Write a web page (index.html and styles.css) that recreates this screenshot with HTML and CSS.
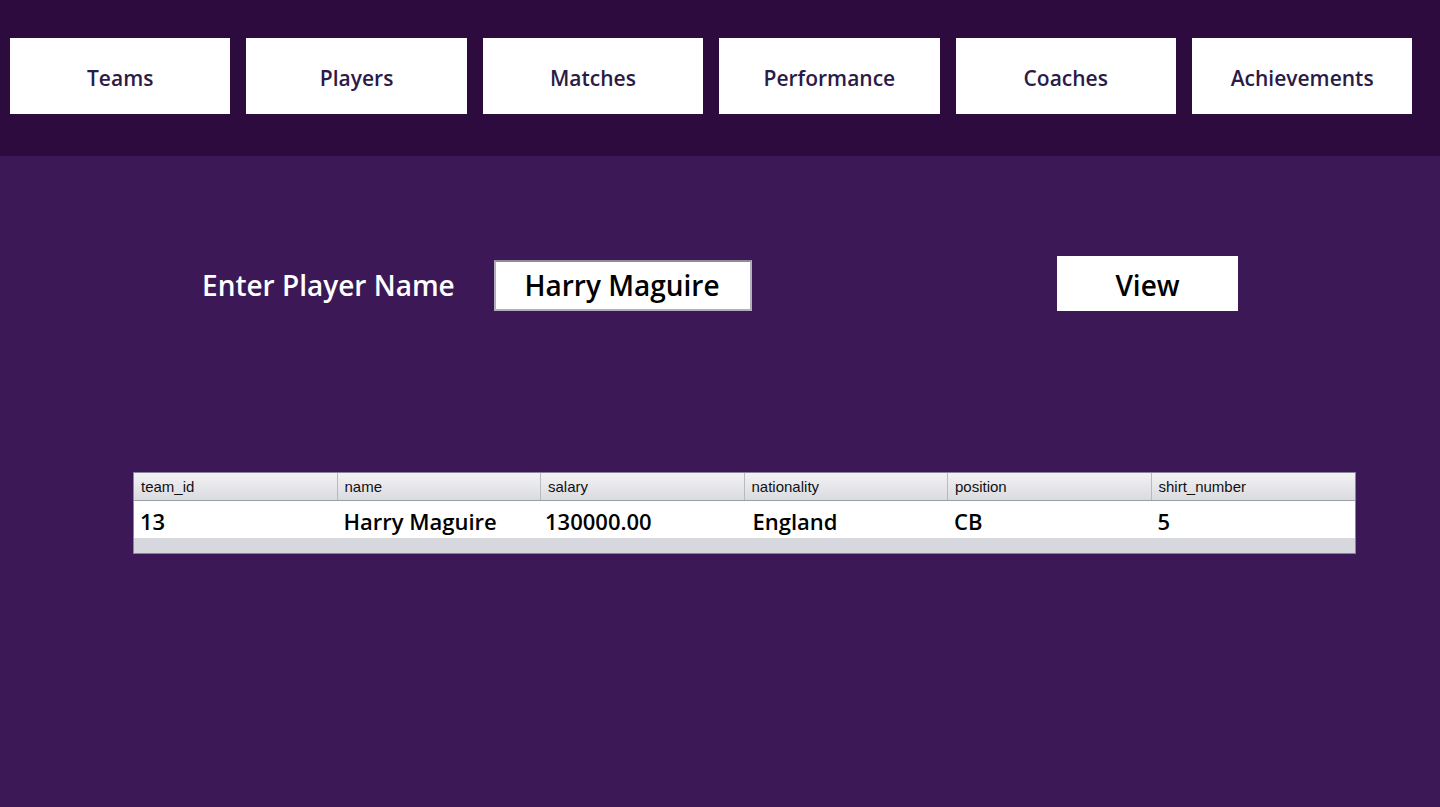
FILE: index.html
```html
<!DOCTYPE html>
<html>
<head>
<meta charset="utf-8">
<link rel="stylesheet" href="styles.css">
</head>
<body>
<header class="topbar">
  <nav class="nav">
    <div class="nav-btn">Teams</div>
    <div class="nav-btn">Players</div>
    <div class="nav-btn">Matches</div>
    <div class="nav-btn">Performance</div>
    <div class="nav-btn">Coaches</div>
    <div class="nav-btn">Achievements</div>
  </nav>
</header>
<main class="main">
  <div class="search-row">
    <div class="label">Enter Player Name</div>
    <div class="input">Harry Maguire</div>
    <div class="view-btn">View</div>
  </div>
  <div class="table">
    <div class="thead">
      <div class="th">team_id</div>
      <div class="th">name</div>
      <div class="th">salary</div>
      <div class="th">nationality</div>
      <div class="th">position</div>
      <div class="th last">shirt_number</div>
    </div>
    <div class="trow">
      <div class="td">13</div>
      <div class="td">Harry Maguire</div>
      <div class="td">130000.00</div>
      <div class="td">England</div>
      <div class="td">CB</div>
      <div class="td">5</div>
    </div>
    <div class="tfill"></div>
  </div>
</main>
</body>
</html>
```
FILE: styles.css
```css
* { box-sizing: border-box; }
html, body { margin: 0; padding: 0; }
body {
  width: 1440px;
  height: 807px;
  overflow: hidden;
  background: #3d1857;
  font-family: "Open Sans", "Noto Sans", sans-serif;
}
.topbar {
  height: 156px;
  background: #2e0b3f;
  padding: 38px 0 0 10px;
}
.nav {
  display: flex;
  gap: 16px;
}
.nav-btn {
  width: 220.4px;
  height: 76px;
  background: #ffffff;
  display: flex;
  align-items: center;
  justify-content: center;
  color: #2c1a47;
  font-size: 21px;
  font-weight: 600;
  padding-top: 3px;
}
.main {
  padding-top: 100px;
}
.search-row {
  display: flex;
  align-items: center;
  height: 54px;
  padding-left: 202px;
}
.label {
  color: #ffffff;
  font-size: 28px;
  font-weight: 600;
  width: 292px;
  padding-top: 4px;
}
.input {
  width: 258px;
  height: 51px;
  background: #ffffff;
  border: 2px solid #b3aebb;
  border-top-color: #908b99;
  display: flex;
  align-items: center;
  justify-content: center;
  font-size: 28px;
  font-weight: 600;
  color: #000;
  margin-top: 4px;
  padding-right: 2px;
}
.view-btn {
  margin-left: 305px;
  width: 181px;
  height: 55px;
  background: #ffffff;
  display: flex;
  align-items: center;
  justify-content: center;
  font-size: 28px;
  font-weight: 600;
  color: #000;
  padding-top: 4px;
}
.table {
  margin: 162px 0 0 133px;
  width: 1223px;
  border: 1px solid #8b8398;
  background: #d6d8de;
}
.thead {
  display: grid;
  grid-template-columns: repeat(6, 1fr);
  height: 28px;
  background: linear-gradient(#f3f3f5, #dadbe0);
  border-bottom: 1px solid #9d9fa8;
}
.th {
  font-family: "Liberation Sans", Arial, sans-serif;
  font-size: 15px;
  color: #111;
  padding: 5px 0 0 7px;
  border-right: 1px solid #b8bac2;
}
.th.last { border-right: none; }
.trow {
  display: grid;
  grid-template-columns: repeat(6, 1fr);
  height: 37px;
  background: #ffffff;
  align-items: center;
}
.td {
  font-size: 22px;
  font-weight: 600;
  color: #000;
  padding-left: 6px;
  padding-top: 2px;
}
.trow .td:nth-child(3) { padding-left: 4px; }
.trow .td:nth-child(4) { padding-left: 8px; }
.tfill { height: 15px; }
```
